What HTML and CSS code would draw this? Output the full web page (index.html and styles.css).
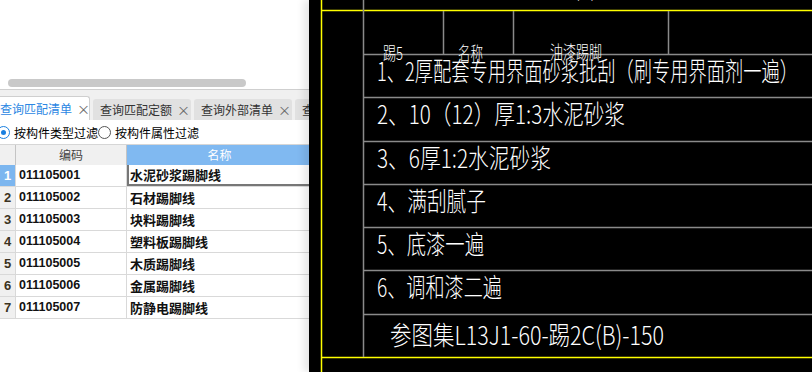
FILE: index.html
```html
<!DOCTYPE html>
<html lang="zh-CN">
<head>
  <meta charset="UTF-8" />
  <title>查询匹配清单</title>
  <link rel="stylesheet" href="styles.css">
</head>
<body>
  <!-- Left query panel -->
  <div class="panel">
    <div class="top-area">
      <div class="scroll-thumb"></div>
    </div>

    <div class="tabbar">
      <div class="tab active">查询匹配清单<span class="close">×</span></div>
      <div class="tab">查询匹配定额<span class="close">×</span></div>
      <div class="tab">查询外部清单<span class="close">×</span></div>
      <div class="tab">查询外部定额<span class="close">×</span></div>
    </div>

    <div class="filter-row">
      <label class="radio checked first"><span class="dot"></span>按构件类型过滤</label>
      <label class="radio"><span class="dot"></span>按构件属性过滤</label>
    </div>

    <div class="grid">
      <div class="row head">
        <div class="num"></div>
        <div class="code">编码</div>
        <div class="name">名称</div>
      </div>
      <div class="row selected">
        <div class="num">1</div>
        <div class="code">011105001</div>
        <div class="name">水泥砂浆踢脚线</div>
      </div>
      <div class="row">
        <div class="num">2</div>
        <div class="code">011105002</div>
        <div class="name">石材踢脚线</div>
      </div>
      <div class="row">
        <div class="num">3</div>
        <div class="code">011105003</div>
        <div class="name">块料踢脚线</div>
      </div>
      <div class="row">
        <div class="num">4</div>
        <div class="code">011105004</div>
        <div class="name">塑料板踢脚线</div>
      </div>
      <div class="row">
        <div class="num">5</div>
        <div class="code">011105005</div>
        <div class="name">木质踢脚线</div>
      </div>
      <div class="row">
        <div class="num">6</div>
        <div class="code">011105006</div>
        <div class="name">金属踢脚线</div>
      </div>
      <div class="row">
        <div class="num">7</div>
        <div class="code">011105007</div>
        <div class="name">防静电踢脚线</div>
      </div>
    </div>
  </div>

  <!-- CAD drawing view -->
  <div class="cad">
    <svg class="drawing" width="503" height="372" viewBox="309 0 503 372">
      <!-- frame -->
      <g class="yellow">
        <line x1="321.5" y1="0" x2="321.5" y2="372" />
        <line x1="321.5" y1="10.5" x2="812" y2="10.5" />
        <line x1="321.5" y1="357.5" x2="812" y2="357.5" />
      </g>
      <g class="grey">
        <line x1="363.5" y1="0" x2="363.5" y2="357" />
        <line x1="443.5" y1="11" x2="443.5" y2="54" />
        <line x1="513.5" y1="11" x2="513.5" y2="54" />
        <line x1="668.5" y1="11" x2="668.5" y2="54" />
        <line x1="363.5" y1="54.5" x2="812" y2="54.5" />
        <line x1="363.5" y1="97.5" x2="812" y2="97.5" />
        <line x1="363.5" y1="141.5" x2="812" y2="141.5" />
        <line x1="363.5" y1="184.5" x2="812" y2="184.5" />
        <line x1="363.5" y1="227.5" x2="812" y2="227.5" />
        <line x1="363.5" y1="270.5" x2="812" y2="270.5" />
        <line x1="363.5" y1="314.5" x2="812" y2="314.5" />
      </g>

      <!-- text -->
      <text class="cad-text small" x="384" y="-2" textLength="400" lengthAdjust="spacingAndGlyphs">3、参图集L13J1-60-踢2C(B)-150（水泥砂浆踢脚线）</text>
      <text class="cad-text label" x="383" y="60" textLength="20" lengthAdjust="spacingAndGlyphs">踢5</text>
      <text class="cad-text label" x="458" y="60" textLength="25" lengthAdjust="spacingAndGlyphs">名称</text>
      <text class="cad-text label" x="550" y="59" textLength="52" lengthAdjust="spacingAndGlyphs">油漆踢脚</text>

      <text class="cad-text" x="377" y="81" textLength="421" lengthAdjust="spacingAndGlyphs">1、2厚配套专用界面砂浆批刮（刷专用界面剂一遍）</text>
      <text class="cad-text" x="377" y="124" textLength="248" lengthAdjust="spacingAndGlyphs">2、10（12）厚1:3水泥砂浆</text>
      <text class="cad-text" x="377" y="168" textLength="174" lengthAdjust="spacingAndGlyphs">3、6厚1:2水泥砂浆</text>
      <text class="cad-text" x="377" y="211" textLength="109" lengthAdjust="spacingAndGlyphs">4、满刮腻子</text>
      <text class="cad-text" x="377" y="254" textLength="107" lengthAdjust="spacingAndGlyphs">5、底漆一遍</text>
      <text class="cad-text" x="377" y="297" textLength="125" lengthAdjust="spacingAndGlyphs">6、调和漆二遍</text>
      <text class="cad-text" x="390" y="345" textLength="274" lengthAdjust="spacingAndGlyphs">参图集L13J1-60-踢2C(B)-150</text>
    </svg>
  </div>
</body>
</html>
```

FILE: styles.css
```css
/* Global */
body {
  margin: 0;
  width: 812px;
  height: 372px;
  display: flex;
  overflow: hidden;
  background: #fff;
  font-family: "Noto Sans CJK SC", "Liberation Sans", sans-serif;
  color: #222;
}

/* Left panel */
.panel {
  width: 309px;
  flex: none;
  display: flex;
  flex-direction: column;
  overflow: hidden;
  background: #fff;
}
.top-area {
  height: 90px;
  display: flex;
  align-items: flex-end;
  padding: 0 0 2px 8px;
  box-sizing: border-box;
  border-bottom: 1px solid #cfcfcf;
}
.scroll-thumb {
  width: 238px;
  height: 8px;
  border-radius: 4px;
  background: #c9c9c9;
}

/* Tabs */
.tabbar {
  height: 30px;
  background: #f0f0f0;
  display: flex;
  align-items: flex-end;
  gap: 3px;
  margin-left: -7px;
  white-space: nowrap;
}
.tab {
  flex: none;
  width: 98px;
  box-sizing: border-box;
  height: 21px;
  line-height: 21px;
  padding: 0 0 0 7px;
  font-size: 12px;
  color: #333;
  background: #e1e1e1;
  border-radius: 3px 3px 0 0;
}
.tab.active {
  width: 97px;
  height: 24px;
  line-height: 23px;
  background: #fff;
  color: #2b87e3;
  border: 1px solid #cfcfcf;
  border-bottom: none;
  padding-left: 6px;
}
.close {
  color: #666;
  margin-left: 5px;
  font-size: 13px;
}

/* Filter radios */
.filter-row {
  height: 24px;
  display: flex;
  align-items: center;
  margin-left: -3px;
  font-size: 12px;
  color: #000;
  white-space: nowrap;
}
.radio {
  display: flex;
  align-items: center;
  gap: 4px;
}
.dot {
  width: 11px;
  height: 11px;
  border: 1px solid #555;
  border-radius: 50%;
  background: #fff;
  position: relative;
}
.radio.checked .dot {
  border-color: #1a7fe0;
}
.radio.checked .dot::after {
  content: "";
  position: absolute;
  left: 3px;
  top: 3px;
  width: 5px;
  height: 5px;
  border-radius: 50%;
  background: #1a7fe0;
}

/* Grid */
.grid {
  border-top: 1px solid #d6d6d6;
}
.row {
  display: flex;
  height: 22px;
  border-bottom: 1px solid #d9d9d9;
  box-sizing: border-box;
}
.row > div {
  box-sizing: border-box;
  border-right: 1px solid #d9d9d9;
  line-height: 21px;
  white-space: nowrap;
}
.num {
  width: 16px;
  background: #f0f0f0;
  text-align: center;
  font-family: "Liberation Sans", sans-serif;
  font-weight: bold;
  font-size: 13px;
  color: #3c3322;
}
.code {
  width: 111px;
  padding-left: 3px;
  font-family: "Liberation Sans", sans-serif;
  font-weight: bold;
  font-size: 12.5px;
  color: #111;
}
.name {
  flex: 1;
  padding-left: 3px;
  font-weight: bold;
  font-size: 13px;
  color: #111;
  border-right: none !important;
}
.row.head {
  height: 20px;
  border-bottom: none;
}
.row.head > div {
  line-height: 20px;
  font-family: "Noto Sans CJK SC", sans-serif;
  font-weight: normal;
  font-size: 12px;
  text-align: center;
  color: #444;
  border-right-color: #c4c4c4;
}
.row.head .num {
  background: #f0f0f0;
}
.row.head .code {
  background: #f0f0f0;
  padding-left: 0;
}
.row.head .name {
  background: #80b9f1;
  color: #fff;
}
.row.selected .num {
  background: #7cb6ef;
  color: #fff;
}
.row.selected .name {
  border: 1px solid #777 !important;
  border-width: 0 0 2px 2px !important;
  line-height: 20px;
  padding-left: 1px;
}

/* CAD view */
.cad {
  flex: 1;
  background: #000;
  box-shadow: -5px 0 8px rgba(0, 0, 0, 0.1);
}
.drawing {
  display: block;
}
.yellow line {
  stroke: #ffff00;
  stroke-width: 1.5;
}
.grey line {
  stroke: #8a8a8a;
  stroke-width: 1.5;
}
.cad-text {
  fill: #fff;
  font-family: "Noto Sans CJK SC", sans-serif;
  font-weight: 300;
  font-size: 26px;
}
.cad-text.label {
  font-size: 18px;
}
.cad-text.small {
  font-size: 18px;
}
```
